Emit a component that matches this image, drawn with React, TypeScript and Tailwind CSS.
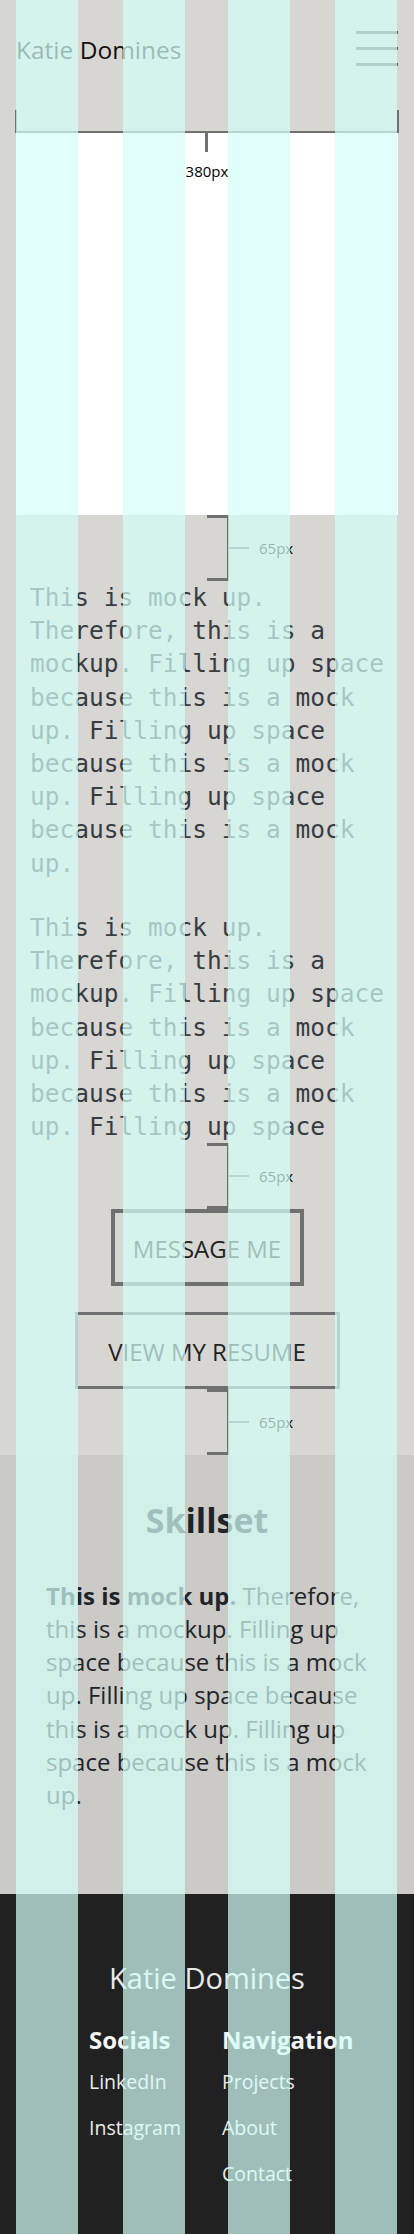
import React from "react";

function Spacer65() {
  return (
    <div className="relative h-[66px]">
      <div className="absolute left-[207px] top-0 h-[66px] w-[22px] border-y-[3px] border-r-2 border-[#707070]" />
      <div className="absolute left-[229px] top-[32px] h-[2px] w-[20px] bg-[#707070]" />
      <span className="absolute left-[259px] top-[23px] text-[15px] leading-[20px] text-black">65px</span>
    </div>
  );
}

const mockText =
  "This is mock up. Therefore, this is a mockup. Filling up space because this is a mock up. Filling up space because this is a mock up. Filling up space because this is a mock up.";
const mockText2 =
  "This is mock up. Therefore, this is a mockup. Filling up space because this is a mock up. Filling up space because this is a mock up. Filling up space";

export default function App() {
  return (
    <div className="relative w-full overflow-hidden bg-[#d8d6d2] font-['Open_Sans','Noto_Sans',sans-serif]">
      {/* Header */}
      <header className="flex h-[110px] items-center justify-between pb-[10px] pl-4 pr-4">
        <span className="text-[24.5px] leading-[32px] text-[#111111]">Katie Domines</span>
        <div className="-mt-1 flex w-[42px] flex-col gap-[13px]">
          <div className="h-[3px] bg-[#616161]" />
          <div className="h-[3px] bg-[#616161]" />
          <div className="h-[3px] bg-[#616161]" />
        </div>
      </header>

      {/* width bracket */}
      <div className="mx-[15px] h-[23px] border-x-2 border-b-2 border-[#707070]" />

      {/* hero image placeholder */}
      <div className="relative mx-4 h-[382px] bg-white">
        <div className="absolute left-[189px] top-0 h-[19px] w-[3px] bg-[#707070]" />
        <span className="absolute left-0 right-0 top-[28px] text-center text-[15px] leading-[20px] text-black">380px</span>
      </div>

      <Spacer65 />

      {/* mono paragraphs */}
      <div className="pl-[30px] pr-4 font-['DejaVu_Sans_Mono','Liberation_Mono',monospace] text-[24.5px] leading-[33.2px] text-[#363c42]">
        <p>{mockText}</p>
        <p className="mt-[31.2px]">{mockText2}</p>
      </div>

      <Spacer65 />

      {/* buttons */}
      <div className="flex flex-col items-center gap-[26px]">
        <div className="flex h-[77px] w-[193px] items-center justify-center border-4 border-[#707070] pt-[3px] text-[24px] leading-[32px] text-[#222222]">
          MESSAGE ME
        </div>
        <div className="flex h-[77px] w-[265px] items-center justify-center border-[3px] border-[#707070] pt-[2px] text-[24px] leading-[32px] text-[#222222]">
          VIEW MY RESUME
        </div>
      </div>

      <Spacer65 />

      {/* Skillset */}
      <section className="h-[439px] bg-[#cccac6] pt-[45px]">
        <h2 className="text-center text-[34px] font-bold leading-[40px] text-[#1f2429]">Skillset</h2>
        <p className="mt-[38.4px] pl-[46px] pr-[30px] text-[24px] leading-[33.2px] text-[#1f2429]">
          <strong className="font-bold">This is mock up.</strong> Therefore, this is a mockup. Filling up space because this is a mock up. Filling up space because this is a mock up. Filling up space because this is a mock up.
        </p>
      </section>

      {/* Footer */}
      <footer className="h-[340px] bg-[#212121] pt-[66px]">
        <div className="text-center text-[29px] leading-[36px] text-[#e8e8e8]">Katie Domines</div>
        <div className="mt-[28px] flex pl-[89px]">
          <div className="w-[133px]">
            <div className="text-[24px] font-bold leading-[32px] text-[#f4f4f4]">Socials</div>
            <ul className="mt-[3px] text-[19.5px] leading-[46px] text-[#ececec]">
              <li>LinkedIn</li>
              <li>Instagram</li>
            </ul>
          </div>
          <div>
            <div className="text-[24px] font-bold leading-[32px] text-[#f4f4f4]">Navigation</div>
            <ul className="mt-[3px] text-[19.5px] leading-[46px] text-[#ececec]">
              <li>Projects</li>
              <li>About</li>
              <li>Contact</li>
            </ul>
          </div>
        </div>
      </footer>

      {/* column grid overlay */}
      <div className="pointer-events-none absolute inset-0 flex">
        <div className="ml-[16px] w-[62px] bg-[rgba(211,255,248,0.71)]" />
        <div className="ml-[45px] w-[62px] bg-[rgba(211,255,248,0.71)]" />
        <div className="ml-[43px] w-[62px] bg-[rgba(211,255,248,0.71)]" />
        <div className="ml-[45px] w-[62px] bg-[rgba(211,255,248,0.71)]" />
      </div>
    </div>
  );
}
